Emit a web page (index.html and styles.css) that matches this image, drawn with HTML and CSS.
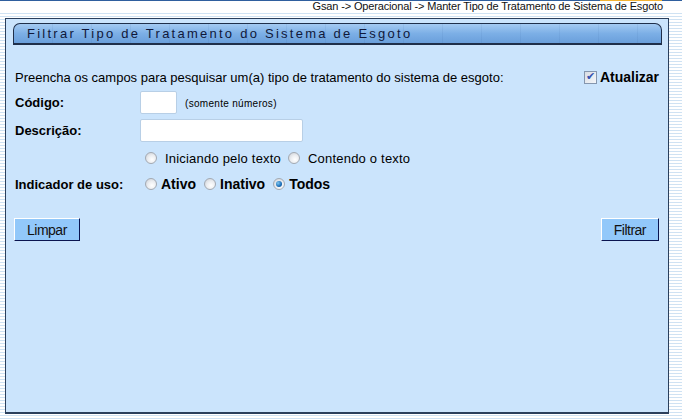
FILE: index.html
```html
<!DOCTYPE html>
<html lang="pt-BR">
<head>
    <meta charset="utf-8">
    <link rel="stylesheet" href="styles.css">
    <title>Filtrar Tipo de Tratamento do Sistema de Esgoto</title>
</head>
<body>
<div class="topLine"><span class="topOrange"></span></div>
<div class="breadcrumb">Gsan -&gt; Operacional -&gt; Manter Tipo de Tratamento de Sistema de Esgoto</div>

<div class="panel">
    <div class="titleBar">Filtrar Tipo de Tratamento do Sistema de Esgoto</div>

    <div class="introRow">
        <span>Preencha os campos para pesquisar um(a) tipo de tratamento do sistema de esgoto:</span>
        <label class="atualizar"><input class="chk" type="checkbox" checked> Atualizar</label>
    </div>

    <div class="formRow">
        <span class="fieldLabel">Código:</span>
        <input class="txt codigo" type="text">
        <span class="hint">(somente números)</span>
    </div>
    <div class="formRow">
        <span class="fieldLabel">Descrição:</span>
        <input class="txt descricao" type="text">
    </div>
    <div class="formRow radios plain">
        <span class="fieldLabel"></span>
        <label><input class="rad" type="radio" name="tipo"> Iniciando pelo texto</label>
        <label><input class="rad" type="radio" name="tipo"> Contendo o texto</label>
    </div>
    <div class="formRow radios bold">
        <span class="fieldLabel">Indicador de uso:</span>
        <label><input class="rad" type="radio" name="uso"> Ativo</label>
        <label><input class="rad" type="radio" name="uso"> Inativo</label>
        <label><input class="rad" type="radio" name="uso" checked> Todos</label>
    </div>

    <div class="buttonRow">
        <button class="btn">Limpar</button>
        <button class="btn">Filtrar</button>
    </div>
</div>
</body>
</html>
```
FILE: styles.css
```css
html, body {
    margin: 0;
    padding: 0;
}
body {
    width: 682px;
    height: 420px;
    overflow: hidden;
    font-family: "Liberation Sans", Arial, sans-serif;
    color: #000;
    background: repeating-linear-gradient(to bottom, #ffffff 0px, #ffffff 1px, #cfe2f3 1px, #cfe2f3 2px, #ffffff 2px, #ffffff 3px);
}

.topLine {
    height: 1px;
    background: #2f5f9e;
    display: flex;
    justify-content: flex-end;
    padding-right: 20px;
}
.topOrange {
    width: 62px;
    background: #f2b233;
}

.breadcrumb {
    height: 10px;
    line-height: 10px;
    font-size: 11px;
    letter-spacing: -0.15px;
    text-align: right;
    padding-right: 19px;
    background: #ffffff;
    color: #111;
}

.panel {
    margin: 7px 13px 0 5px;
    height: 396px;
    box-sizing: border-box;
    border: 1px solid #2b3f5c;
    border-bottom-width: 2px;
    background: #cbe4fc;
    padding: 4px 6px 0 7px;
}

/* cabeçalho azul com cantos cortados */
.titleBar {
    height: 22px;
    box-sizing: border-box;
    border: 1px solid #1f2f4a;
    border-bottom-width: 2px;
    border-radius: 7px 7px 0 0;
    background: repeating-linear-gradient(to right, transparent 0, transparent 38px, rgba(40,80,140,0.08) 38px, rgba(40,80,140,0.08) 39px),
                linear-gradient(to bottom, #a4caf2 0%, #7cafe6 50%, #6a9fdb 100%);
    color: #10183a;
    font-size: 13px;
    letter-spacing: 2.25px;
    line-height: 19px;
    padding-left: 13px;
}

.introRow {
    display: flex;
    justify-content: space-between;
    align-items: center;
    margin-top: 24px;
    font-size: 13px;
    padding-left: 2px;
}
.atualizar {
    font-weight: bold;
    font-size: 14px;
    display: flex;
    align-items: center;
    gap: 3px;
    margin-right: 3px;
}

/* checkbox estilo antigo */
.chk {
    appearance: none;
    -webkit-appearance: none;
    position: relative;
    margin: 0;
    width: 13px;
    height: 13px;
    border: 1px solid #8596ae;
    background: linear-gradient(135deg, #d9dde4 0%, #f4f6f9 100%);
    box-sizing: border-box;
}
.chk:checked::after {
    content: "\2714";
    position: absolute;
    left: 1px;
    top: -2px;
    font-size: 11px;
    color: #3553b0;
}

.formRow {
    display: flex;
    align-items: center;
    padding-left: 2px;
    font-size: 13px;
    margin-top: 5px;
}
.introRow + .formRow {
    margin-top: 6px;
}
.fieldLabel {
    width: 125px;
    font-weight: bold;
}
.txt {
    height: 23px;
    box-sizing: border-box;
    border: 1px solid #b8cfe6;
    border-radius: 2px;
    background: #fff;
    margin: 0;
}
.codigo {
    width: 37px;
}
.descricao {
    width: 163px;
}
.hint {
    font-size: 10px;
    letter-spacing: 0.3px;
    margin-left: 8px;
    margin-top: 2px;
}

.radios {
    margin-top: 7px;
    height: 18px;
}
.radios.bold {
    margin-top: 8px;
}
.radios label {
    display: flex;
    align-items: center;
}

/* radio estilo antigo */
.rad {
    appearance: none;
    -webkit-appearance: none;
    position: relative;
    width: 12px;
    height: 12px;
    margin: 0;
    border-radius: 50%;
    border: 1px solid #a3a9b2;
    background: radial-gradient(circle at 60% 65%, #ffffff 0%, #eceef1 45%, #c9cdd3 100%);
    box-sizing: border-box;
}
.rad:checked::after {
    content: "";
    position: absolute;
    left: 2px;
    top: 2px;
    width: 6px;
    height: 6px;
    border-radius: 50%;
    background: radial-gradient(circle at 35% 35%, #7fc6f0 0%, #1a6db8 60%, #0d3f7a 100%);
}

.plain label {
    letter-spacing: 0.2px;
    margin-right: 2px;
}
.plain .rad {
    margin: 0 8px 0 5px;
}
.bold label {
    font-weight: bold;
    font-size: 14px;
    margin-right: 3px;
}
.bold .rad {
    margin: 0 4px 0 5px;
}

.buttonRow {
    display: flex;
    justify-content: space-between;
    margin-top: 25px;
    padding-left: 1px;
    padding-right: 3px;
}
.btn {
    font-family: "Liberation Sans", Arial, sans-serif;
    font-size: 14px;
    letter-spacing: -0.5px;
    color: #111;
    background: #92c8fa;
    border: 1px solid;
    border-color: #ffffff #0a1450 #0a1450 #ffffff;
    height: 23px;
    padding: 0 12px;
    cursor: pointer;
}
```
